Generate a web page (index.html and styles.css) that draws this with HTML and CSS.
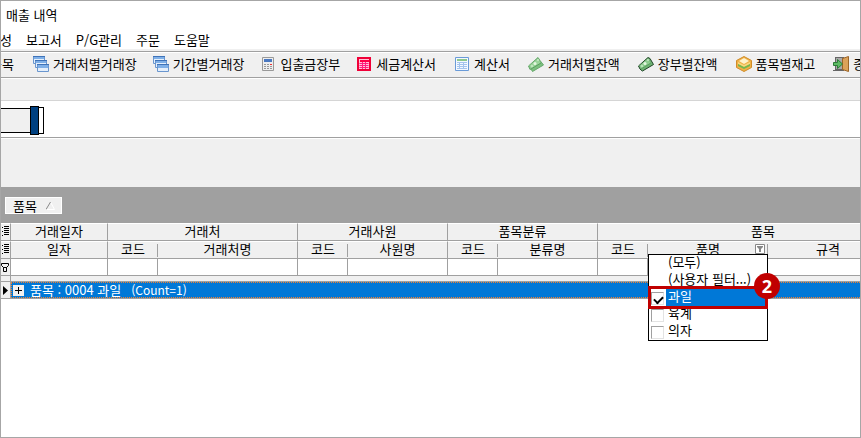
FILE: index.html
```html
<!DOCTYPE html>
<html lang="ko">
<head>
    <meta charset="UTF-8">
    <meta name="viewport" content="width=device-width, initial-scale=1.0">
    <title>매출 내역</title>
    <link rel="stylesheet" href="styles.css">
</head>
<body>
    <div class="window">
        <h1 class="title">매출 내역</h1>

        <nav class="menu">
            <button>구성</button>
            <button>보고서</button>
            <button>P/G관리</button>
            <button>주문</button>
            <button>도움말</button>
        </nav>

        <!-- 도구 모음 -->
        <div class="toolbar">
            <button>품목</button>
            <button>
                <svg viewBox="0 0 16 16"><g fill="#e4effb" stroke="#6a96cf"><path d="M.5.500h11v7H.5z"/><path d="M2.500 4.500h11v7h-11z"/><path d="M4.500 8.500h11v7h-11z"/></g><path fill="#7fb0e8" d="M1 1h10v2H1zM3 5h10v2H3zM5 9h10v3H5z"/><path fill="#3f73b8" d="M0 0h12v1H0zM2 4h12v1H2zM4 8h12v1H4z"/></svg>
                거래처별거래장
            </button>
            <button>
                <svg viewBox="0 0 16 16"><g fill="#e4effb" stroke="#6a96cf"><path d="M.5.500h11v7H.5z"/><path d="M2.500 4.500h11v7h-11z"/><path d="M4.500 8.500h11v7h-11z"/></g><path fill="#7fb0e8" d="M1 1h10v2H1zM3 5h10v2H3zM5 9h10v3H5z"/><path fill="#3f73b8" d="M0 0h12v1H0zM2 4h12v1H2zM4 8h12v1H4z"/></svg>
                기간별거래장
            </button>
            <button>
                <svg viewBox="0 0 16 16"><path fill="#eee" stroke="#999" d="M2.500 1.500h11v13h-11z"/><path fill="#4a78c0" d="M4 3h8v3H4z"/><path stroke="#999" stroke-dasharray="2 1" d="M4 8.500h8M4 10.500h8M4 12.500h8"/><path fill="#e33" d="M10 8h2v1h-2z"/></svg>
                입출금장부
            </button>
            <button>
                <svg viewBox="0 0 16 16"><path fill="#ffc4d8" stroke="#f00038" stroke-width="2" d="M2 2h12v12H2z"/><path fill="#ff0048" d="M4 4h9v2H4z"/><path fill="none" stroke="#ff2080" d="M3.500 7.500h9M3.500 9.500h9M3.500 11.500h9M6.500 6v7M9.500 6v7"/></svg>
                세금계산서
            </button>
            <button class="wide">
                <svg viewBox="0 0 16 16"><path fill="#f4f9ff" stroke="#6a9bd8" d="M1.500 1.500h13v13h-13z"/><path fill="#8cc88c" d="M3 3h10v2H3z"/><path fill="none" stroke="#a4c4ee" d="M3 6.500h10M3 8.500h10M3 10.500h10M3 12.500h10M5.500 6v7M9.500 6v7"/></svg>
                계산서
            </button>
            <button class="wide">
                <svg viewBox="0 0 16 16"><path fill="#7cc07f" stroke="#67a86b" d="M.5 10L10 1.500l2 3 3.500 4.500-11 6.500-1.500-2.500-1 .5z"/><path fill="#9ad49a" d="M1.500 9.500L10 2.500l2.500 4.500-9.500 6z"/><path fill="none" stroke="#5a9f60" d="M3 13l10-6"/><circle cx="7" cy="7.500" r="1.500" fill="#e4f6e0"/><path fill="#e4f6e0" d="M9 4l1-1 1 1-1 1zM3 10l1-1 1 1-1 1z"/></svg>
                거래처별잔액
            </button>
            <button class="wide">
                <svg viewBox="0 0 16 16"><path fill="#6fb373" stroke="#1f4427" d="M.5 10L10 1.500l2 1 3.500 6-11 6.500-1.500-1-1-1z"/><path fill="#8ccb8e" d="M1.500 9.500L10 2.500l2.500 4.500-9.500 6z"/><path fill="none" stroke="#5a9f60" d="M3 13l10-6"/><circle cx="7" cy="7.500" r="1.500" fill="#e4f6e0"/><path fill="#e4f6e0" d="M9 4l1-1 1 1-1 1zM3 10l1-1 1 1-1 1z"/></svg>
                장부별잔액
            </button>
            <button class="wide">
                <svg viewBox="0 0 16 16"><path fill="#efb045" stroke="#d08c28" d="M8 .5l7.500 4v7l-7.500 4-7.500-4v-7z"/><path fill="#fff3cc" d="M8 2l5 3-5 3-5-3z"/><path fill="#f9d77f" d="M2 6l6 3v2L2 8zM14 6L8 9v2l6-3z"/><path fill="#73b84e" d="M2 8l6 3 6-3v2l-6 3-6-3z"/></svg>
                품목별재고
            </button>
            <button class="wide">
                <svg viewBox="0 0 16 16"><path fill="#666" d="M2 1h9v14H0v-1h2z"/><path fill="#a9a9a9" d="M3 2h6v11H3z"/><path fill="#dba25a" stroke="#9c6528" d="M9.500 2.500l6-2v15l-6-2z"/><path fill="#5dbb63" stroke="#2b7c37" d="M.5 6.500h4v-3l5 4.500-5 4.500v-3h-4z"/></svg>
                종료
            </button>
        </div>

        <div class="spacer"></div>
        <div class="track">
            <div class="track-box">
                <div class="track-fill"></div>
                <div class="track-thumb"></div>
            </div>
        </div>
        <div class="panel"></div>

        <div class="group-bar">
            <button class="group-chip">
                품목
                <svg viewBox="0 0 9 9"><path fill="none" stroke="#fff" d="M4.500 1l4 7.500H0"/><path fill="none" stroke="#888" d="M0 8.500L4.500 1"/></svg>
            </button>
        </div>

        <div class="grid-area">
            <table class="grid">
                <colgroup>
                    <col class="c-mark">
                    <col class="c-date">
                    <col class="c-code"><col class="c-customer">
                    <col class="c-code"><col class="c-name">
                    <col class="c-code"><col class="c-name">
                    <col class="c-code"><col class="c-item"><col class="c-item"><col>
                </colgroup>
                <thead>
                    <tr>
                        <th class="mark"><svg viewBox="0 0 7 10"><path stroke="#000" d="M0 1.500h1M2 .5h5M2 2.500h5M0 5.500h1M2 4.500h5M2 6.500h5M0 9.500h1M2 8.500h5"/></svg></th>
                        <th>거래일자</th>
                        <th colspan="2">거래처</th>
                        <th colspan="2">거래사원</th>
                        <th colspan="2">품목분류</th>
                        <th colspan="4">품목</th>
                    </tr>
                    <tr>
                        <th class="mark"><svg viewBox="0 0 7 10"><path stroke="#000" d="M0 1.500h1M2 .5h5M2 2.500h5M0 5.500h1M2 4.500h5M2 6.500h5M0 9.500h1M2 8.500h5"/></svg></th>
                        <th>일자</th>
                        <th class="short">코드</th>
                        <th>거래처명</th>
                        <th class="short">코드</th>
                        <th>사원명</th>
                        <th class="short">코드</th>
                        <th>분류명</th>
                        <th class="short">코드</th>
                        <th class="short filtered">
                            품명
                            <button class="filter-btn" aria-label="필터"><svg viewBox="0 0 10 10"><path fill="#fff" stroke="#888" d="M.5.500h9v9h-9z"/><path fill="#888" d="M2 2h6v1L6 5v3H4V5L2 3z"/></svg></button>
                            <div class="filter-list">
                                <button class="option">(모두)</button>
                                <button class="option">(사용자 필터...)</button>
                                <label class="option selected"><input type="checkbox" checked><span>과일</span></label>
                                <label class="option"><input type="checkbox"><span>육계</span></label>
                                <label class="option"><input type="checkbox"><span>의자</span></label>
                                <b class="step">2</b>
                            </div>
                        </th>
                        <th class="short">규격</th>
                        <th></th>
                    </tr>
                </thead>
                <tbody>
                    <tr class="filter-row">
                        <td class="mark"><svg viewBox="0 0 8 9"><path fill="none" stroke="#000" d="M.5.500h7v2l-2 2h-3l-2-2zM2.500 4.500h3v4h-3z"/></svg></td>
                        <td></td><td></td><td></td><td></td><td></td><td></td><td></td><td></td><td></td><td></td><td></td>
                    </tr>
                    <tr class="divider"><td class="mark"></td><td colspan="11"></td></tr>
                    <tr class="group-row">
                        <td class="mark"><svg viewBox="0 0 5 9"><path d="M0 0l5 4.500L0 9z"/></svg></td>
                        <td colspan="11">
                            <div class="group-line">
                                <button class="expand" aria-label="펼치기"><svg viewBox="0 0 7 7"><path stroke="#000" d="M0 3.500h7M3.500 0v7"/></svg></button>
                                <span>품목 : 0004 과일</span>
                                <span class="count">(Count=1)</span>
                            </div>
                        </td>
                    </tr>
                </tbody>
            </table>
        </div>
    </div>
</body>
</html>
```

FILE: styles.css
```css
* {
    box-sizing: border-box;
}

body {
    margin: 0;
    font-family: "Noto Sans CJK KR", sans-serif;
    font-size: 13px;
    line-height: 16px;
    color: #000;
    background: #fff;
}

button {
    margin: 0;
    padding: 0;
    border: none;
    background: none;
    font: inherit;
    color: inherit;
    white-space: nowrap;
}

svg {
    display: block;
    flex: none;
}

.window {
    display: flex;
    flex-direction: column;
    min-height: 100vh;
    border: 1px solid #a6a6a6;
    overflow: hidden;
}

.title {
    margin: 0;
    padding: 6px 5px;
    font-size: 13px;
    font-weight: 400;
}

/* 메뉴 */
.menu {
    display: flex;
    gap: 14px;
    height: 20px;
    margin-left: -13px;
}

.menu button {
    height: 22px;
}

.toolbar {
    display: flex;
    align-items: center;
    gap: 16px;
    height: 29px;
    border-top: 2px solid #f0f0f0;
    background: linear-gradient(#a0a0a0 1px, #fff 1px, #fff 2px, #f0f0f0 2px);
    border-bottom: 1px solid #a0a0a0;
}

.toolbar button {
    display: flex;
    align-items: center;
    gap: 4px;
}

.toolbar button:first-child {
    margin-left: -11px;
    margin-right: 3px;
}

.toolbar .wide {
    margin-left: 2px;
}

.toolbar svg {
    width: 16px;
    height: 16px;
}

.spacer {
    height: 23px;
    border-top: 1px solid #fff;
    border-bottom: 1px solid #d5d5d5;
    background: #f0f0f0;
}

.track {
    padding: 5px 0 2px;
    border-bottom: 1px solid #a0a0a0;
}

.track-box {
    display: flex;
    align-items: center;
    width: 43px;
}

.track-fill {
    flex: 1;
    height: 25px;
    border: solid #000;
    border-width: 1px 0;
    background: #f0f0f0;
}

.track-thumb {
    width: 9px;
    height: 29px;
    border: 1px solid #000;
    background: #004080;
}

.track-box::after {
    content: "";
    width: 4px;
    height: 25px;
    border: solid #000;
    border-width: 1px 1px 1px 0;
}

.panel {
    height: 49px;
    border-top: 1px solid #fff;
    background: #f0f0f0;
}

.group-bar {
    padding: 10px 4px 9px;
    background: #a0a0a0;
}

.group-chip {
    display: flex;
    align-items: center;
    gap: 9px;
    height: 17px;
    padding: 0 6px 0 7px;
    border: 1px solid #fff;
    background: #f0f0f0;
}

.group-chip svg {
    width: 9px;
    height: 9px;
}

/* 내역 표 */
.grid-area {
    flex: 1;
    overflow: hidden;
}

.grid {
    width: 100%;
    min-width: 928px;
    table-layout: fixed;
    border-spacing: 0;
}

.c-mark { width: 10px; }
.c-date { width: 97px; }
.c-code { width: 50px; }
.c-customer { width: 140px; }
.c-name { width: 100px; }
.c-item { width: 120px; }

.grid th,
.grid td {
    padding: 0;
    border-right: 1px solid #a0a0a0;
    border-bottom: 1px solid #a0a0a0;
}

.grid th {
    height: 18px;
    padding-bottom: 2px;
    line-height: 14px;
    font-weight: 400;
    background: #f0f0f0;
    border-top: 1px solid #fff;
}

.grid .short {
    border-right: none;
    background: linear-gradient(#a0a0a0, #a0a0a0) right 2px / 1px 13px no-repeat #f0f0f0;
}

.grid .mark {
    background: #f0f0f0;
}

.mark svg {
    height: 10px;
    width: 7px;
    margin-left: 1px;
}

.filter-row td {
    height: 17px;
}

.filter-row .mark svg {
    width: 8px;
    height: 9px;
    margin-left: 0;
}

.divider td {
    height: 6px;
    background: #f0f0f0;
}

.group-row td {
    height: 17px;
}

.group-row .mark svg {
    width: 5px;
    height: 9px;
    margin-left: 2px;
}

.group-line {
    display: flex;
    align-items: center;
    height: 16px;
    padding-left: 1px;
    border: 1px dotted #f08030;
    background: #0078d7;
    color: #fff;
    line-height: 14px;
}

.expand {
    width: 11px;
    height: 11px;
    margin-right: 6px;
    padding: 2px;
    background: #f0f0f0;
}

.count {
    margin-left: 10px;
    font-size: 12px;
}

/* 필터 목록 */
.filtered {
    position: relative;
}

.filter-btn {
    position: absolute;
    top: 2px;
    right: 3px;
    width: 10px;
    height: 10px;
}

.filter-list {
    position: absolute;
    top: 12px;
    left: 0;
    right: 0;
    z-index: 1;
    border: 1px solid #000;
    background: #fff;
    text-align: left;
}

.option {
    display: flex;
    align-items: center;
    width: 100%;
    height: 17px;
    line-height: 14px;
}

button.option {
    padding: 0 0 3px 19px;
}

.option input {
    appearance: none;
    width: 13px;
    height: 13px;
    margin: 1px 2px 0;
    border: 1px solid #e3e3e3;
    border-top-color: #a0a0a0;
    border-left-color: #a0a0a0;
    background: #fff;
}

.option input:checked::after {
    content: "";
    display: block;
    width: 7px;
    height: 4px;
    margin: 3px 2px;
    border: solid #000;
    border-width: 0 0 2px 2px;
    transform: rotate(-45deg);
}

.option span {
    flex: 1;
    height: 17px;
    padding-left: 2px;
}

.selected {
    position: relative;
}

.selected span {
    background: #0078d7;
    color: #fff;
}

.selected::after {
    content: "";
    position: absolute;
    inset: -3px -1px;
    border: 3px solid #c00000;
}

.step {
    position: absolute;
    top: 18px;
    right: -13px;
    width: 26px;
    height: 26px;
    border-radius: 50%;
    background: #c00000;
    color: #fff;
    font: 700 18px/26px "Open Sans", sans-serif;
    text-align: center;
}
```
